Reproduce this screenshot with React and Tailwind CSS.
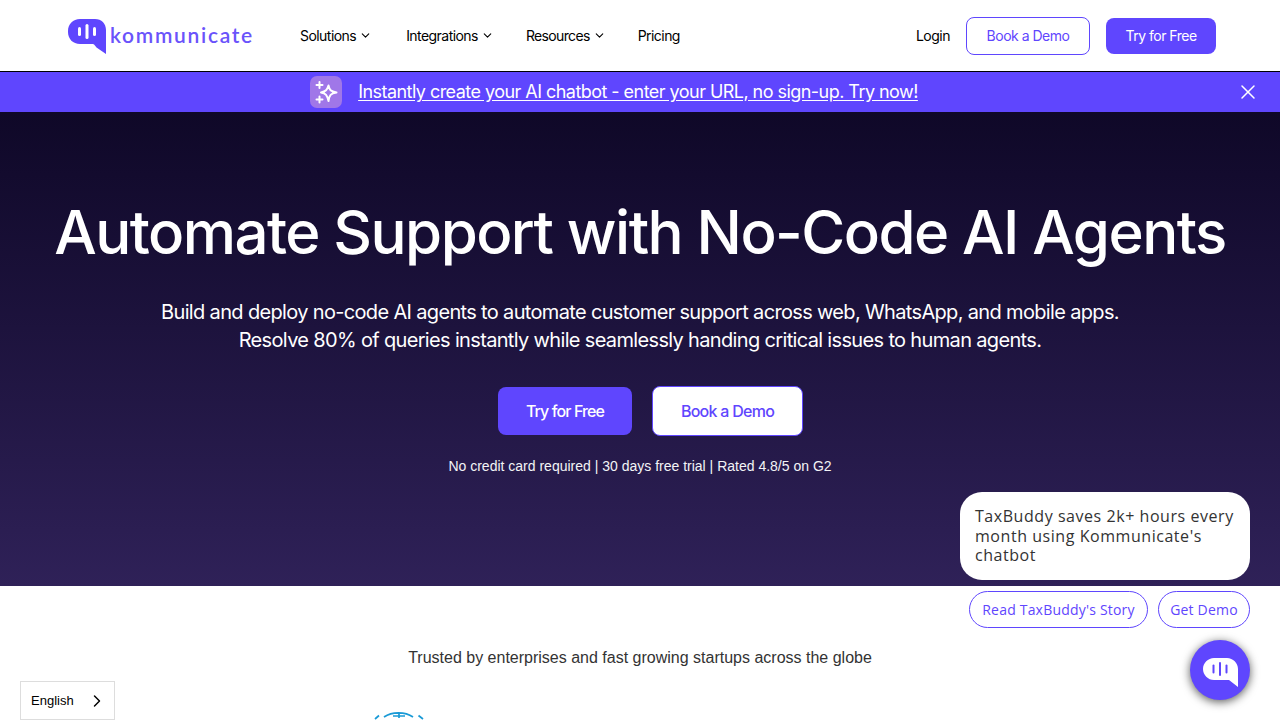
import { ChevronDown, ChevronRight, X } from "lucide-react";

const NAV_LINKS = [
  { label: "Solutions", menu: true, className: "" },
  { label: "Integrations", menu: true, className: "ml-px" },
  { label: "Resources", menu: true, className: "-ml-px tracking-[-0.65px]" },
  { label: "Pricing", className: "-ml-px" },
];

function LogoMark({ className }) {
  return (
    <svg viewBox="0 0 38 35" className={className}>
      <path d="M12 0H27C33.5 0 38 4.5 38 11V35L28.5 28.5C27.5 27.6 26.5 25 25 25H12C5 25 0 20 0 13V12C0 5 5 0 12 0Z" fill="#5f46fe" />
      <rect x="10" y="8" width="3" height="9" rx="1.5" fill="#fff" />
      <rect x="17.5" y="5" width="3" height="15" rx="1.5" fill="#fff" />
      <rect x="25" y="8" width="3" height="9" rx="1.5" fill="#fff" />
    </svg>
  );
}

function SparkleIcon() {
  return (
    <svg viewBox="0 0 32 32" className="w-8 h-8">
      <rect width="32" height="32" rx="7" fill="#a077e8" />
      <path d="M18.5 9.5C19.5 14 20.5 15.5 26.5 16.5C20.5 17.5 19.5 19 18.5 25C17 19 16 17.5 11 16.5C16 15.5 17 14 18.5 9.5Z" fill="none" stroke="#fff" strokeWidth="2" strokeLinejoin="round" />
      <path d="M9.5 6V12M6.5 9H12.5M9.5 20.5V26.5M6.5 23.5H12.5" stroke="#fff" strokeWidth="2" strokeLinecap="round" />
    </svg>
  );
}

function Navbar() {
  return (
    <nav className="h-[72px] bg-white border-b border-black flex items-center pl-[68px] pr-16 font-['Inter',sans-serif]">
      <a className="flex items-center w-[232px]">
        <LogoMark className="w-[38px] h-[35px] mt-0.5" />
        <span className="ml-[4px] text-[#6a53fb] text-[21px] leading-none tracking-[1.7px] font-['Lato',sans-serif] font-semibold -mt-0.5">kommunicate</span>
      </a>
      <div className="flex items-center gap-[33px] text-sm tracking-[-0.55px] text-black">
        {NAV_LINKS.map((link) => (
          <a key={link.label} className={`flex items-center gap-[3px] ${link.className}`}>
            {link.label}
            {link.menu && <ChevronDown size={13} strokeWidth={2} />}
          </a>
        ))}
      </div>
      <div className="ml-auto flex items-center text-sm tracking-[-0.5px]">
        <a className="text-black">Login</a>
        <a className="ml-4 w-[124px] h-[38px] flex items-center justify-center rounded-lg border border-[#5f46fe] text-[#5f46fe]">Book a Demo</a>
        <a className="ml-[16px] w-[110px] h-9 flex items-center justify-center rounded-lg bg-[#5f46fe] text-white">Try for Free</a>
      </div>
    </nav>
  );
}

function Banner() {
  return (
    <div className="relative h-10 bg-[#5f46fe] flex items-center justify-center font-['Inter',sans-serif]">
      <div className="flex items-center gap-4 -ml-[52px]">
        <SparkleIcon />
        <a className="text-white text-lg tracking-[-0.54px] underline underline-offset-2">Instantly create your AI chatbot - enter your URL, no sign-up. Try now!</a>
      </div>
      <X size={24} strokeWidth={1.5} className="absolute right-5 top-2 text-white" />
    </div>
  );
}

function Hero() {
  return (
    <section className="h-[474px] bg-gradient-to-b from-[#0f0828] to-[#2f2158] flex flex-col items-center text-white font-['Inter',sans-serif]">
      <h1 className="mt-[84px] text-[60px] leading-[72px] font-medium tracking-[-1.55px]">Automate Support with No-Code AI Agents</h1>
      <p className="mt-[30px] text-xl leading-7 tracking-[-0.66px] text-center">
        Build and deploy no-code AI agents to automate customer support across web, WhatsApp, and mobile apps.
        <br />
        Resolve 80% of queries instantly while seamlessly handing critical issues to human agents.
      </p>
      <div className="mt-[32px] flex items-center gap-5 ml-[21px] text-base font-medium">
        <a className="w-[134px] h-12 flex items-center justify-center rounded-lg bg-[#5f46fe] tracking-[-0.9px]">Try for Free</a>
        <a className="w-[151px] h-[50px] flex items-center justify-center rounded-lg bg-white border border-[#5f46fe] text-[#5f46fe] tracking-[-0.73px]">Book a Demo</a>
      </div>
      <p className="mt-[20px] text-sm leading-5 font-['Liberation_Sans',sans-serif] text-gray-100">No credit card required | 30 days free trial | Rated 4.8/5 on G2</p>
    </section>
  );
}

function Trusted() {
  return (
    <section className="h-[134px] bg-white overflow-hidden flex flex-col items-center">
      <p className="mt-[60px] text-base leading-6 text-[#333] font-['Liberation_Sans',sans-serif]">Trusted by enterprises and fast growing startups across the globe</p>
      <div className="w-full pl-[372px] mt-[42px]">
        <svg viewBox="0 0 54 10" className="w-[54px] h-2.5">
          {/* top of the globe logo, the rest is below the fold */}
          <path d="M3 7L7 3.5M51 7L46.5 3.5M12 5C20 -0.5 33 -0.5 41 5M27 1V6M21 4H33" fill="none" stroke="#1a9ad6" strokeWidth="1.7" />
        </svg>
      </div>
    </section>
  );
}

function ChatWidget() {
  return (
    <div className="absolute right-[30px] top-[492px] w-[290px] flex flex-col items-end font-['Open_Sans',sans-serif]">
      <div className="w-[290px] h-[88px] bg-white rounded-[22px] pl-[15px] pr-2 pt-[15px] text-base leading-[19.5px] tracking-[0.55px] text-[#333]">
        TaxBuddy saves 2k+ hours every month using Kommunicate's chatbot
      </div>
      <div className="mt-[11px] flex gap-2.5 text-sm tracking-[0.2px] text-[#5f46fe] font-medium">
        <a className="w-[179px] h-[37px] flex items-center justify-center rounded-full bg-white border border-[#5f46fe]">Read TaxBuddy's Story</a>
        <a className="w-[92px] h-[37px] flex items-center justify-center rounded-full bg-white border border-[#5f46fe]">Get Demo</a>
      </div>
      <button className="mt-3 w-[60px] h-[60px] rounded-full bg-[#5f46fe] flex items-center justify-center shadow-[0_2px_10px_rgba(0,0,0,0.65)]">
        <svg viewBox="0 0 35 29" className="w-[35px] h-[29px] mt-1">
          <path d="M11 0H24C30 0 35 5 35 11V29L26 22H11C5 22 0 17 0 11C0 5 5 0 11 0Z" fill="#fff" />
          <rect x="9.5" y="6.5" width="2" height="9" rx="1" fill="#5f46fe" />
          <rect x="16" y="4" width="2" height="14" rx="1" fill="#5f46fe" />
          <rect x="22.5" y="6.5" width="2" height="9" rx="1" fill="#5f46fe" />
        </svg>
      </button>
    </div>
  );
}

function LanguagePicker() {
  return (
    <div className="absolute left-5 top-[681px] w-[95px] h-[39px] bg-white border border-[#ddd] flex items-center justify-between pl-[10px] pr-[7px] text-[13px] text-black font-['Liberation_Sans',sans-serif]">
      English
      <ChevronRight size={20} strokeWidth={1.75} />
    </div>
  );
}

export default function App() {
  return (
    <div className="relative h-[720px] overflow-hidden">
      <Navbar />
      <Banner />
      <Hero />
      <Trusted />
      <ChatWidget />
      <LanguagePicker />
    </div>
  );
}
